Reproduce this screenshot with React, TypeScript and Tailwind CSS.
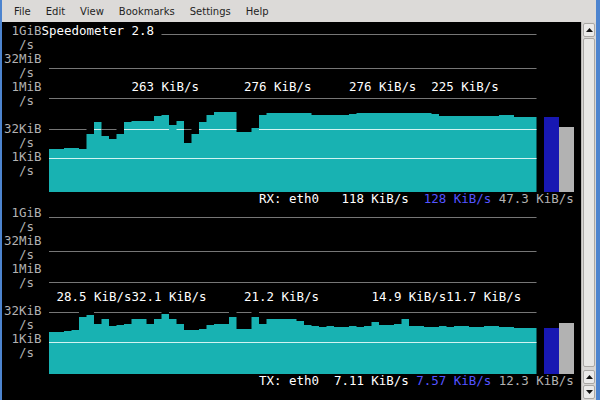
import React from "react";

type Line = { y: number; row: number; from: number };

const COLW = 7.5;
const X0 = 45; // graph starts at terminal column 6
const H = 168; // 12 rows of 14px
const GREY = "#767676";
const LIGHT = "#d2f4f2";

// column tops, in page pixels, read off the screen
const rxTops = [
  149, 149, 148, 148, 149, 134, 122, 136, 139, 134,
  122, 121, 121, 121, 116, 115, 125, 121, 143, 134,
  122, 115, 112, 112, 112, 132, 132, 128, 115, 113,
  113, 113, 113, 113, 113, 115, 115, 115, 115, 115,
  114, 113, 113, 113, 113, 113, 113, 113, 113, 113,
  113, 114, 116, 116, 116, 116, 116, 116, 116, 116,
  115, 115, 117, 117, 117,
].map((v) => v - 24);

const txTops = [
  332, 332, 331, 330, 317, 315, 324, 319, 326, 325,
  324, 319, 319, 324, 319, 314, 319, 324, 330, 330,
  329, 325, 324, 324, 317, 329, 329, 317, 324, 319,
  319, 319, 319, 321, 325, 326, 327, 326, 327, 327,
  326, 327, 326, 322, 325, 325, 324, 319, 326, 326,
  327, 327, 326, 327, 326, 326, 327, 327, 326, 326,
  327, 327, 328, 328, 328,
].map((v) => v - 206);

const rxLines: Line[] = [
  { y: 10, row: 0, from: 21 },
  { y: 44, row: 3, from: 6 },
  { y: 74, row: 5, from: 6 },
  { y: 105, row: 7, from: 6 },
  { y: 134, row: 9, from: 6 },
];

const txLines: Line[] = [
  { y: 11, row: 0, from: 6 },
  { y: 45, row: 3, from: 6 },
  { y: 76, row: 5, from: 6 },
  { y: 106, row: 7, from: 6 },
  { y: 136, row: 9, from: 6 },
];

function segments(tops: number[], line: Line) {
  const out: { x: number; w: number; c: string }[] = [];
  for (let i = line.from - 6; i < tops.length; i++) {
    const t = tops[i];
    let c = "";
    if (t >= (line.row + 1) * 14) c = GREY;
    else if (t <= line.row * 14) c = LIGHT;
    else continue;
    const x = X0 + i * COLW;
    const last = out[out.length - 1];
    if (last && last.c === c && Math.abs(last.x + last.w - x) < 0.01) last.w += COLW;
    else out.push({ x, w: COLW, c });
  }
  return out;
}

function Graph({ tops, lines, blue, grey }: { tops: number[]; lines: Line[]; blue: number; grey: number }) {
  let d = `M${X0},${H}`;
  tops.forEach((t, i) => {
    d += ` L${X0 + i * COLW},${t} L${X0 + (i + 1) * COLW},${t}`;
  });
  d += ` L${X0 + tops.length * COLW},${H} Z`;

  return (
    <svg width={578} height={H} className="block col-start-1 row-start-1">
      <path d={d} fill="#18b2b2" />
      {lines.map((ln, k) =>
        segments(tops, ln).map((s, j) => (
          <rect key={`${k}-${j}`} x={s.x} y={ln.y} width={s.w} height={1} fill={s.c} />
        ))
      )}
      <rect x={540} y={blue} width={15} height={H - blue} fill="#1818b2" />
      <rect x={555} y={grey} width={15} height={H - grey} fill="#b2b2b2" />
    </svg>
  );
}

function Rows({ rows }: { rows: [string, string][] }) {
  return (
    <div className="col-start-1 row-start-1 flex flex-col">
      {rows.map(([label, rest], i) => (
        <div key={i} className="h-[14px] leading-[14px] whitespace-pre">
          <span className="text-[#b2b2b2]">{label}</span>
          <span className="text-white">{rest}</span>
        </div>
      ))}
    </div>
  );
}

const rxRows: [string, string][] = [
  [" 1GiB", "Speedometer 2.8"],
  ["  /s", ""],
  ["32MiB", ""],
  ["  /s", ""],
  [" 1MiB", "            263 KiB/s      276 KiB/s     276 KiB/s  225 KiB/s"],
  ["  /s", ""],
  ["", ""],
  ["32KiB", ""],
  ["  /s", ""],
  [" 1KiB", ""],
  ["  /s", ""],
  ["", ""],
];

const txRows: [string, string][] = [
  [" 1GiB", ""],
  ["  /s", ""],
  ["32MiB", ""],
  ["  /s", ""],
  [" 1MiB", ""],
  ["  /s", ""],
  ["     ", "  28.5 KiB/s32.1 KiB/s     21.2 KiB/s       14.9 KiB/s11.7 KiB/s"],
  ["32KiB", ""],
  ["  /s", ""],
  [" 1KiB", ""],
  ["  /s", ""],
  ["", ""],
];

function Panel(props: { tops: number[]; lines: Line[]; blue: number; grey: number; rows: [string, string][] }) {
  return (
    <div className="grid">
      <Graph tops={props.tops} lines={props.lines} blue={props.blue} grey={props.grey} />
      <Rows rows={props.rows} />
    </div>
  );
}

function StatusLine({ name, a, b, c, pad }: { name: string; a: string; b: string; c: string; pad: string }) {
  return (
    <div className="h-[14px] leading-[14px] whitespace-pre">
      <span className="text-white">{" ".repeat(34) + name + pad + a + "  ".slice(0, pad.length - 1)}</span>
      <span className="text-[#5454ff]">{b}</span>
      <span className="text-[#b2b2b2]">{" " + c}</span>
    </div>
  );
}

function Arrow({ up }: { up?: boolean }) {
  return (
    <div className="h-[14px] mx-[1px] mt-[1px] rounded-[2px] border border-[#aaa8a5] bg-[#ecebea] flex items-center justify-center">
      <svg width="7" height="4" viewBox="0 0 7 4">
        <path d={up ? "M0,4 L3.5,0 L7,4 Z" : "M0,0 L3.5,4 L7,0 Z"} fill="#111" />
      </svg>
    </div>
  );
}

export default function App() {
  return (
    <div className="w-[600px] h-[400px] flex bg-[#dcdad8] overflow-hidden">
      <div className="w-[2px] bg-[#4d84cf]" />
      <div className="flex-1 flex flex-col min-w-0">
        {/* menu bar */}
        <div className="h-[22px] flex items-center gap-[15px] pl-[12px] text-[10px] text-[#1f1f1f] font-['DejaVu_Sans',sans-serif]">
          {["File", "Edit", "View", "Bookmarks", "Settings", "Help"].map((m) => (
            <span key={m}>{m}</span>
          ))}
        </div>
        <div className="flex-1 flex min-h-0">
          {/* terminal */}
          <div className="w-[579px] bg-black pt-[2px] pl-[2px] text-[12.46px] font-['DejaVu_Sans_Mono',monospace]">
            <Panel tops={rxTops} lines={rxLines} blue={93} grey={103} rows={rxRows} />
            <StatusLine name="RX: eth0" pad="   " a="118 KiB/s" b="128 KiB/s" c="47.3 KiB/s" />
            <Panel tops={txTops} lines={txLines} blue={122} grey={117} rows={txRows} />
            <StatusLine name="TX: eth0" pad="  " a="7.11 KiB/s" b="7.57 KiB/s" c="12.3 KiB/s" />
          </div>
          {/* scrollbar */}
          <div className="w-[15px] flex flex-col bg-[#d8d6d4] border-l border-[#b9b7b4]">
            <Arrow up />
            <div className="flex-1 mx-[1px] mt-[1px] rounded-[2px] border border-[#aaa8a5] bg-[#e8e7e5]" />
            <div className="mt-[2px]" />
            <Arrow up />
            <div className="mb-[1px]">
              <Arrow />
            </div>
          </div>
        </div>
      </div>
      <div className="w-[4px] bg-[#4d84cf]" />
    </div>
  );
}
